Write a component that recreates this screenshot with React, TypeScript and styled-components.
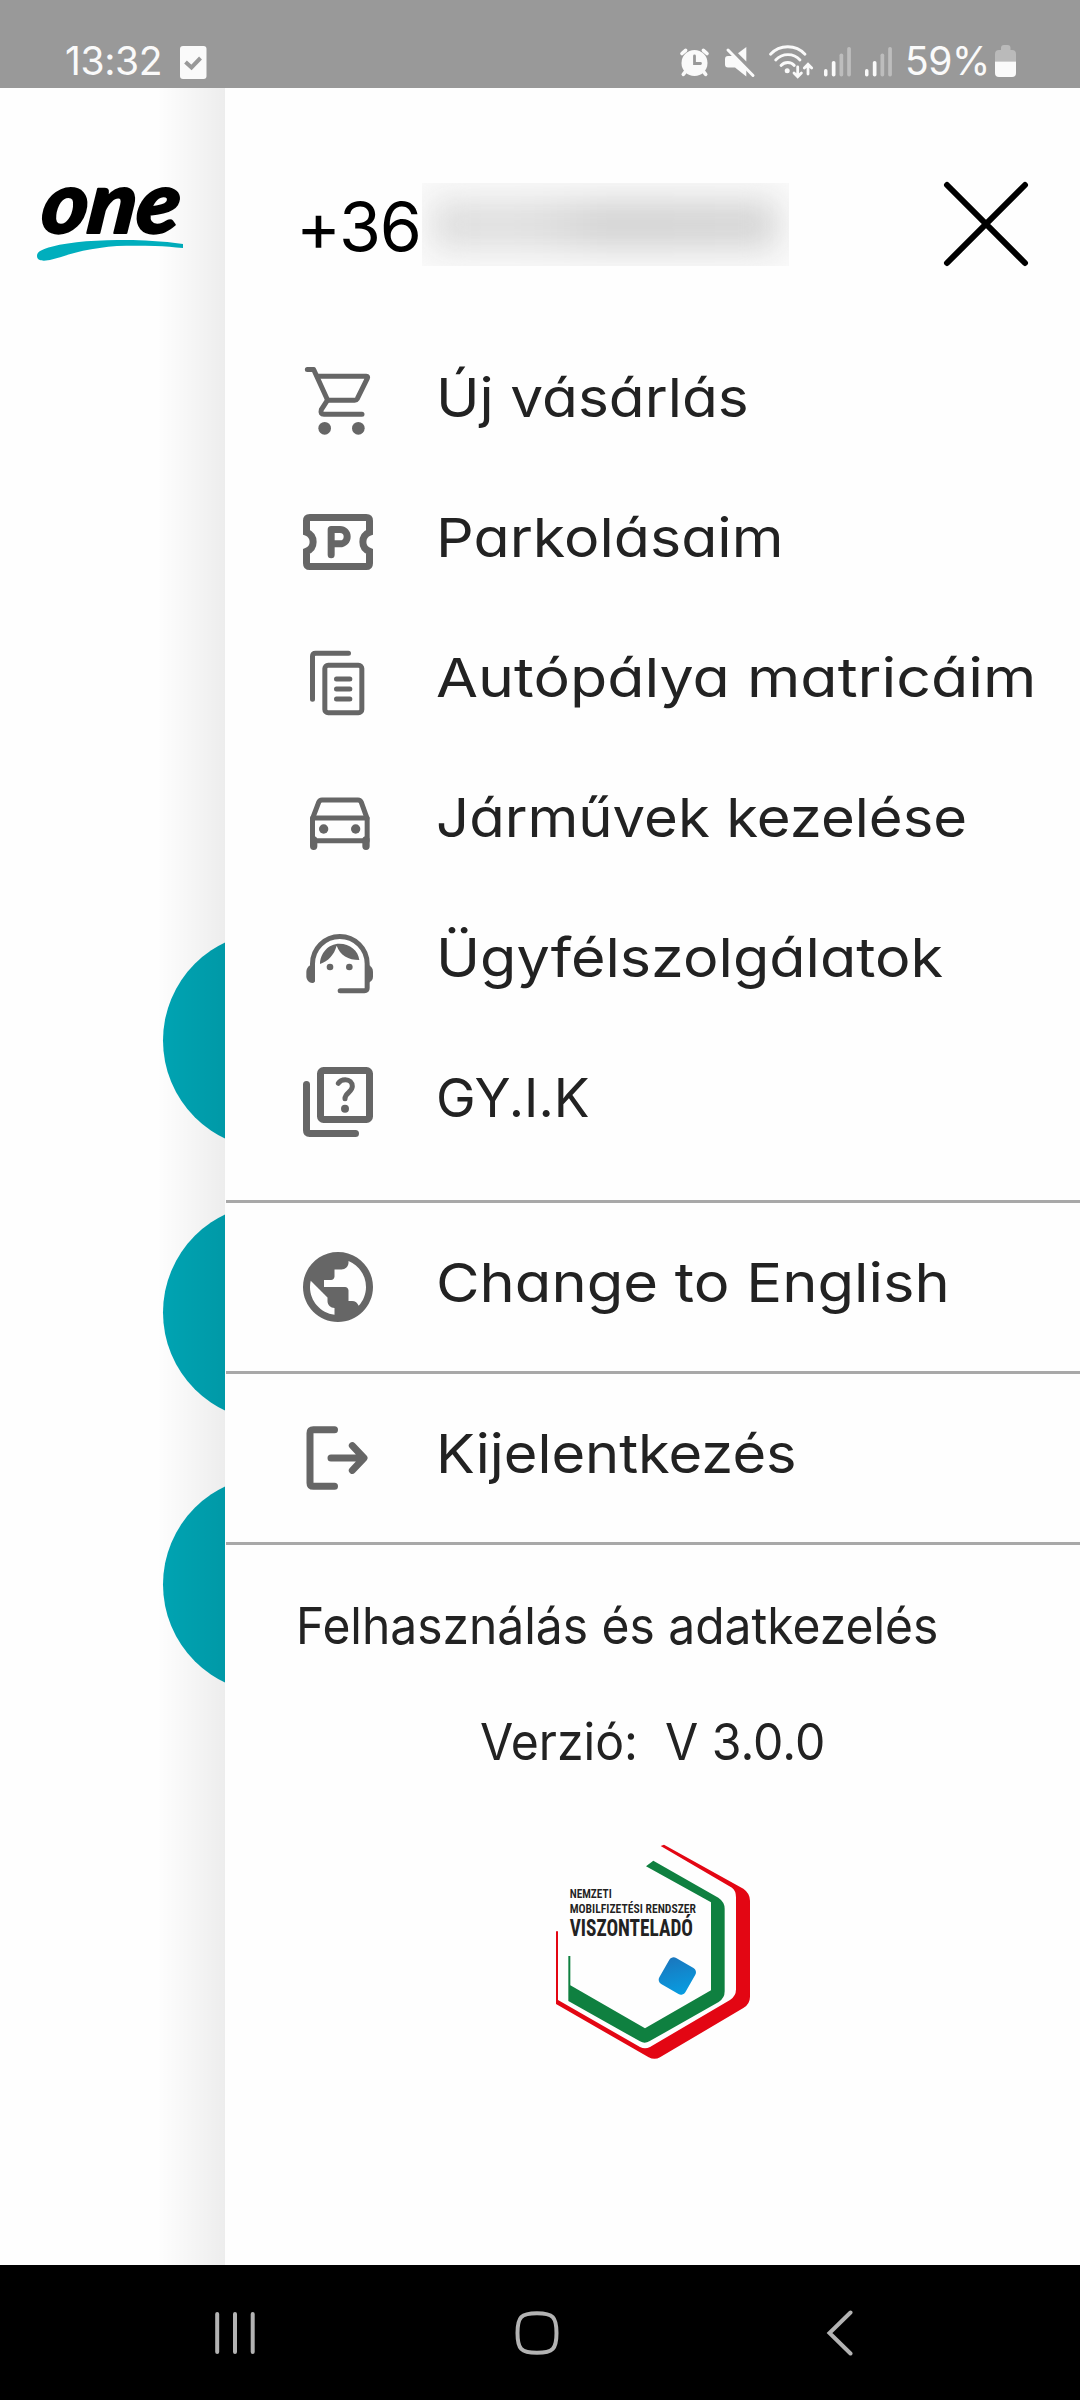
import React from "react";
import styled, { createGlobalStyle } from "styled-components";
import { MdPublic } from "react-icons/md";

const GlobalStyle = createGlobalStyle`
  * {
    box-sizing: border-box;
  }

  body {
    margin: 0;
    background: #fefefe;
    font-family: "Inter", "Liberation Sans", sans-serif;
  }
`;

const Screen = styled.div`
  display: flex;
  flex-direction: column;
  width: 1080px;
  height: 2400px;
  overflow: hidden;
`;

/* status bar */

const StatusBar = styled.header`
  display: flex;
  align-items: flex-start;
  justify-content: space-between;
  height: 88px;
  padding: 45px 64px 0 65px;
  background: #999;
  color: #fafafa;
`;

const StatusGroup = styled.div`
  display: flex;
  align-items: flex-start;
`;

const StatusText = styled.span<{ $gap?: number }>`
  margin-left: ${p => p.$gap || 0}px;
  font-size: 39px;
  line-height: 32px;
  letter-spacing: -0.4px;
  white-space: nowrap;
`;

const StatusIcon = styled.svg<{ $gap?: number }>`
  display: block;
  flex: none;
  margin-left: ${p => p.$gap || 0}px;
  overflow: visible;
`;

/* page behind the drawer */

const Body = styled.main`
  display: flex;
  height: 2177px;
`;

const Page = styled.section`
  position: relative;
  width: 225px;
  overflow: hidden;

  &::after {
    content: "";
    position: absolute;
    top: 0;
    right: 0;
    bottom: 0;
    width: 68px;
    background: linear-gradient(to right, rgba(0, 0, 0, 0), rgba(0, 0, 0, 0.065));
  }
`;

const Logo = styled.svg`
  display: block;
  margin: 99px 0 0 37px;
  overflow: visible;
`;

const Circles = styled.div`
  display: flex;
  flex-direction: column;
  gap: 55px;
  padding: 671px 0 0 163px;
`;

const Circle = styled.div`
  width: 217px;
  height: 217px;
  border-radius: 50%;
  background: #00a4b3;
`;

/* drawer */

const Drawer = styled.aside`
  flex: 1;
  min-width: 0;
  background: #fefefe;
`;

const DrawerHeader = styled.div`
  display: flex;
  align-items: flex-start;
  height: 244px;
  padding: 93px 51px 0 71px;
`;

const Phone = styled.div`
  width: 126px;
  padding-top: 4px;
  color: #000;
  font-size: 68px;
  line-height: 83px;
  letter-spacing: -1.3px;
  white-space: nowrap;
`;

const HiddenDigits = styled.div`
  position: relative;
  width: 367px;
  height: 83px;
  margin-top: 2px;
  overflow: hidden;
  background: #fafafa;

  &::before {
    content: "";
    position: absolute;
    inset: 17px 12px 17px 10px;
    background: linear-gradient(to right, #dedede, #dfdfdf 28%, #d2d2d2 52%, #d6d6d6);
    filter: blur(16px);
  }
`;

const CloseIcon = styled.svg`
  display: block;
  margin-left: auto;
`;

const Menu = styled.nav`
  padding-bottom: 28px;
`;

const MenuItem = styled.a<{ $height?: number }>`
  display: flex;
  align-items: center;
  height: ${p => p.$height || 140}px;
  padding-left: 71px;
  color: #666;
`;

const MenuSection = styled.div`
  border-top: 3px solid #a8a8a8;
  margin-left: 1px;

  ${MenuItem} {
    padding-left: 70px;
  }
`;

const Label = styled.span<{ $stretch: number }>`
  margin-left: 56px;
  padding-bottom: 9px;
  color: #222;
  font-size: 54px;
  line-height: 66px;
  font-feature-settings: "cv11";
  white-space: nowrap;
  transform: scaleX(${p => p.$stretch});
  transform-origin: left;
`;

const Footer = styled.footer`
  margin-left: 1px;
  border-top: 3px solid #a8a8a8;
  color: #222;
`;

const FooterText = styled.div<{ $left: number; $top: number; $stretch: number }>`
  margin: ${p => p.$top}px 0 0 ${p => p.$left}px;
  font-size: 51px;
  line-height: 60px;
  white-space: pre;
  transform: scaleX(${p => p.$stretch});
  transform-origin: left;
`;

const Badge = styled.svg`
  display: block;
  margin: 48px 0 0 304px;
`;

/* system navigation */

const NavBar = styled.footer`
  display: flex;
  align-items: center;
  height: 135px;
  padding-left: 214px;
  background: #000;
`;

const NavIcon = styled.svg<{ $gap?: number }>`
  margin-left: ${p => p.$gap || 0}px;
  fill: none;
  stroke: #b3b3b3;
  stroke-width: 4;
  stroke-linecap: round;
`;

const icon = {
  width: 84,
  height: 84,
  viewBox: "0 0 252 252",
  fill: "none",
  stroke: "currentColor",
  strokeLinecap: "round" as const,
  strokeLinejoin: "round" as const
};

const CartIcon = () => (
  <svg {...icon} strokeWidth={15}>
    <path d="M34 28.5H53L95 121" />
    <path d="M64 49H211q6 0 3 6L184 116q-3 5-8 5H94L76 149q-4 14 8 14H198" />
    <circle cx={86} cy={205} r={19} fill="currentColor" stroke="none" />
    <circle cx={187} cy={205} r={19} fill="currentColor" stroke="none" />
  </svg>
);

const TicketIcon = () => (
  <svg {...icon} strokeWidth={21}>
    <path
      d="M31.5 97V62.5q0-10 10-10h169q10 0 10 10V97C194 108 194 144 220.5 154V189.5q0 10-10 10h-169q-10 0-10-10V154C58 144 58 108 31.5 97Z"
      strokeLinejoin="miter"
    />
    <path d="M105.5 164V88.5H132a21.5 21.5 0 0 1 0 43H105.5" />
  </svg>
);

const DocumentsIcon = () => (
  <svg {...icon} strokeWidth={15}>
    <path d="M49.5 177.5V49q0-9.5 9.5-9.5H157.5" />
    <rect x={86.5} y={75.5} width={111} height={143} rx={10} />
    <path d="M121.5 117H161.5M121.5 147H161.5M121.5 177H161.5" />
  </svg>
);

const CarIcon = () => (
  <svg {...icon} strokeWidth={15}>
    <path d="M49.5 116L68 67q3-7 10-7H186q7 0 10 7L213.5 116V182H49.5Z" />
    <path d="M50 114H213" />
    <path d="M53 180V199M210 180V199" strokeWidth={22} />
    <circle cx={83} cy={147} r={14} fill="currentColor" stroke="none" />
    <circle cx={179} cy={147} r={14} fill="currentColor" stroke="none" />
  </svg>
);

const AgentIcon = () => (
  <svg {...icon} strokeWidth={15}>
    <path d="M49.5 180V131.5a82 82 0 0 1 164 0V204q0 8-8 8H132.5" />
    <g fill="currentColor" stroke="none">
      <path d="M57 130C40 134 31 144 31 156V168C31 180 39 189 49 189C54 189 57 186 57 181Z" />
      <path d="M213 133C225 137 231 146 231 155V170C231 180 225 186 213 189Z" />
      <path d="M72 132C72 100 97 71 130 71C162 71 187 92 190 120C157 120 132 105 122 77C114 105 97 123 72 132Z" />
      <circle cx={102} cy={141} r={10} />
      <circle cx={160} cy={141} r={10} />
    </g>
  </svg>
);

const FaqIcon = () => (
  <svg {...icon} strokeWidth={21}>
    <rect x={73.5} y={31.5} width={147} height={147} rx={9} />
    <path d="M31.5 73.5V211q0 9.5 9.5 9.5H178.5" />
    <path d="M127 70C131 63 139 59 148 59C160 59 169 68 169 79C169 97 147 98 147 116" strokeWidth={15} />
    <circle cx={147} cy={146} r={12} fill="currentColor" stroke="none" />
  </svg>
);

const LogoutIcon = () => (
  <svg {...icon} strokeWidth={21}>
    <path d="M115.5 41.5H52q-10 0-10 10V201q0 10 10 10H115.5" />
    <path d="M105 126H200M169 89L204 126L169 163" />
  </svg>
);

const menuItems = [
  { label: "Új vásárlás", icon: <CartIcon />, stretch: 1.085 },
  { label: "Parkolásaim", icon: <TicketIcon />, stretch: 1.095 },
  { label: "Autópálya matricáim", icon: <DocumentsIcon />, stretch: 1.128 },
  { label: "Járművek kezelése", icon: <CarIcon />, stretch: 1.075 },
  { label: "Ügyfélszolgálatok", icon: <AgentIcon />, stretch: 1.098 },
  { label: "GY.I.K", icon: <FaqIcon />, stretch: 0.985 }
];

const SignalIcon = ({ gap }: { gap: number }) => (
  <StatusIcon $gap={gap} width={27} height={33} viewBox="0 0 27 33" fill="#fafafa">
    <rect x={0} y={24} width={3.5} height={7.5} rx={1.7} />
    <rect x={7.8} y={16} width={3.7} height={15.5} rx={1.8} />
    <rect x={15.5} y={8.5} width={3.7} height={23} rx={1.8} fill="#bdbdbd" />
    <rect x={23.2} y={2} width={3.7} height={29.5} rx={1.8} fill="#bdbdbd" />
  </StatusIcon>
);

const Status = () => (
  <StatusBar>
    <StatusGroup>
      <StatusText>13:32</StatusText>
      <StatusIcon $gap={18} width={27} height={34} viewBox="0 0 27 34">
        <rect x={0} y={1} width={26.5} height={33} rx={3} fill="#fafafa" />
        <path d="M5.5 17L11.5 22.5L20.5 13" fill="none" stroke="#999" strokeWidth={4} />
      </StatusIcon>
    </StatusGroup>
    <StatusGroup>
      <StatusIcon width={29} height={33} viewBox="0 0 29 33" fill="none" stroke="#fafafa" strokeLinecap="round">
        <circle cx={14.5} cy={18} r={13} fill="#fafafa" stroke="none" />
        <path d="M2 8.5L5.6 5.3M27 8.5L23.4 5.3" strokeWidth={3.6} />
        <path d="M6 26L3.3 29.3M23 26L25.7 29.3" strokeWidth={3.6} />
        <path d="M14.5 11V18.5H20.5" stroke="#999" strokeWidth={2.8} />
      </StatusIcon>
      <StatusIcon $gap={16} width={30} height={33} viewBox="0 0 30 33" fill="#fafafa">
        <path d="M3 11H8.5L21.3 24V31.5L10 22.5H3q-3 0-3-3V14q0-3 3-3z" />
        <path d="M13 8.3L21.3 2V16.5z" />
        <path d="M3 5L28 30.5" stroke="#fafafa" strokeWidth={3} strokeLinecap="round" />
      </StatusIcon>
      <StatusIcon
        $gap={14}
        width={45}
        height={33}
        viewBox="0 0 45 33"
        fill="none"
        stroke="#fafafa"
        strokeWidth={2.8}
        strokeLinecap="round"
      >
        <path d="M1.5 9.3C10.5 -0.8 27 -0.8 36 9.3" />
        <path d="M6.7 15C13.5 7.7 24.5 7.7 31 15" />
        <path d="M12 20.5C15.5 16.5 22 16.5 25.3 20.5" />
        <circle cx={18.2} cy={25.7} r={2.5} fill="#fafafa" stroke="none" />
        <path d="M28.7 22V31.5M25 28L28.7 31.7L32.4 28" />
        <path d="M39 29V19.5M35.3 23L39 19.3L42.7 23" />
      </StatusIcon>
      <SignalIcon gap={9.5} />
      <SignalIcon gap={14} />
      <StatusText $gap={13.5}>59%</StatusText>
      <StatusIcon $gap={5} width={21} height={34} viewBox="0 0 21 34">
        <path d="M6 5V3q0-3 3-3h3.500q3 0 3 3V5H17q4 0 4 4V16.5H0V9q0-4 4-4z" fill="#bababa" />
        <path d="M0 16.5H21V28q0 4-4 4H4q-4 0-4-4z" fill="#fafafa" />
      </StatusIcon>
    </StatusGroup>
  </StatusBar>
);

const OneLogo = () => (
  <Logo width={146} height={74} viewBox="0 0 146 74">
    <text
      x={8}
      y={46}
      fontFamily="Lato, sans-serif"
      fontStyle="italic"
      fontWeight={900}
      fontSize={86}
      textLength={138}
      lengthAdjust="spacingAndGlyphs"
      transform="skewX(-7)"
      stroke="#000"
      strokeWidth={2}
      strokeLinejoin="round"
    >
      one
    </text>
    <path
      d="M0 69C0 64 6 62 14.6 59.700C25 57 36 55.500 49 54.300C63 53.200 77 53 90.500 53C104 53 125 54 146 57V61C137 60.300 128 59 118 59C105 58.500 92 58.500 80 59C68 60 57 61.500 46 63.700C35 66 25 70 14.800 72.500C9 74 0 75 0 69Z"
      fill="#00aebd"
    />
  </Logo>
);

const ResellerBadge = () => (
  <Badge width={250} height={260} viewBox="0 0 750 780">
    <path
      d="M392 78L402 74L640 206Q660 220 660 242V530Q660 552 640 564L390 712Q374 721 356 712L78 552V334H84V540L330 681Q345 689 360 681L600 540Q618 529 618 508V232Q618 212 606 203Z"
      fill="#e30613"
    />
    <path
      d="M348 139L370 122L565 233Q584 246 584 266V514Q584 535 566 546L358 664Q344 672 330 664L115 543V408H121V496L345 625L543 511V247Z"
      fill="#0f8040"
    />
    <defs>
      <linearGradient id="cube" x1="0" y1="0" x2="1" y2="1">
        <stop offset="0" stopColor="#1b75bc" />
        <stop offset="1" stopColor="#069fe3" />
      </linearGradient>
    </defs>
    <rect x={397} y={423} width={90} height={90} rx={15} transform="rotate(30 442 468)" fill="url(#cube)" />
    <g fontFamily="'Roboto Condensed', Roboto, sans-serif" fill="#222">
      <text x={119} y={234} fontSize={40} fontWeight={600} textLength={126} lengthAdjust="spacingAndGlyphs">
        NEMZETI
      </text>
      <text x={119} y={278} fontSize={40} fontWeight={600} textLength={379} lengthAdjust="spacingAndGlyphs">
        MOBILFIZETÉSI RENDSZER
      </text>
      <text x={119} y={347} fontSize={70} fontWeight={700} textLength={370} lengthAdjust="spacingAndGlyphs">
        VISZONTELADÓ
      </text>
    </g>
  </Badge>
);

const App = () => {
  return (
    <Screen>
      <GlobalStyle />
      <Status />
      <Body>
        <Page>
          <OneLogo />
          <Circles>
            <Circle />
            <Circle />
            <Circle />
          </Circles>
        </Page>
        <Drawer>
          <DrawerHeader>
            <Phone>+36</Phone>
            <HiddenDigits />
            <CloseIcon width={86} height={86} viewBox="0 0 86 86" stroke="#000" strokeWidth={6} strokeLinecap="round">
              <path d="M4 4L82 82M82 4L4 82" />
            </CloseIcon>
          </DrawerHeader>
          <Menu>
            {menuItems.map(item => (
              <MenuItem key={item.label}>
                {item.icon}
                <Label $stretch={item.stretch}>{item.label}</Label>
              </MenuItem>
            ))}
          </Menu>
          <MenuSection>
            <MenuItem $height={168}>
              <MdPublic size={84} />
              <Label $stretch={1.105}>Change to English</Label>
            </MenuItem>
          </MenuSection>
          <MenuSection>
            <MenuItem $height={168}>
              <LogoutIcon />
              <Label $stretch={1.07}>Kijelentkezés</Label>
            </MenuItem>
          </MenuSection>
          <Footer>
            <FooterText $top={51} $left={70} $stretch={0.94}>
              Felhasználás és adatkezelés
            </FooterText>
            <FooterText $top={56} $left={254} $stretch={0.944}>
              {"Verzió:\u00a0\u00a0V 3.0.0"}
            </FooterText>
            <ResellerBadge />
          </Footer>
        </Drawer>
      </Body>
      <NavBar>
        <NavIcon width={42} height={46} viewBox="0 0 42 46">
          <path d="M3.2 4V42M21 4V42M38.7 4V42" />
        </NavIcon>
        <NavIcon $gap={258} width={46} height={46} viewBox="0 0 46 46">
          <path d="M23 3.2C39 3.2 42.5 7 42.5 23S39 42.8 23 42.8S3.5 39 3.5 23S7 3.2 23 3.2Z" />
        </NavIcon>
        <NavIcon $gap={266} width={28} height={46} viewBox="0 0 28 46">
          <path d="M24.5 2.5L3.5 23L24.5 43.5" />
        </NavIcon>
      </NavBar>
    </Screen>
  );
};

export default App;
